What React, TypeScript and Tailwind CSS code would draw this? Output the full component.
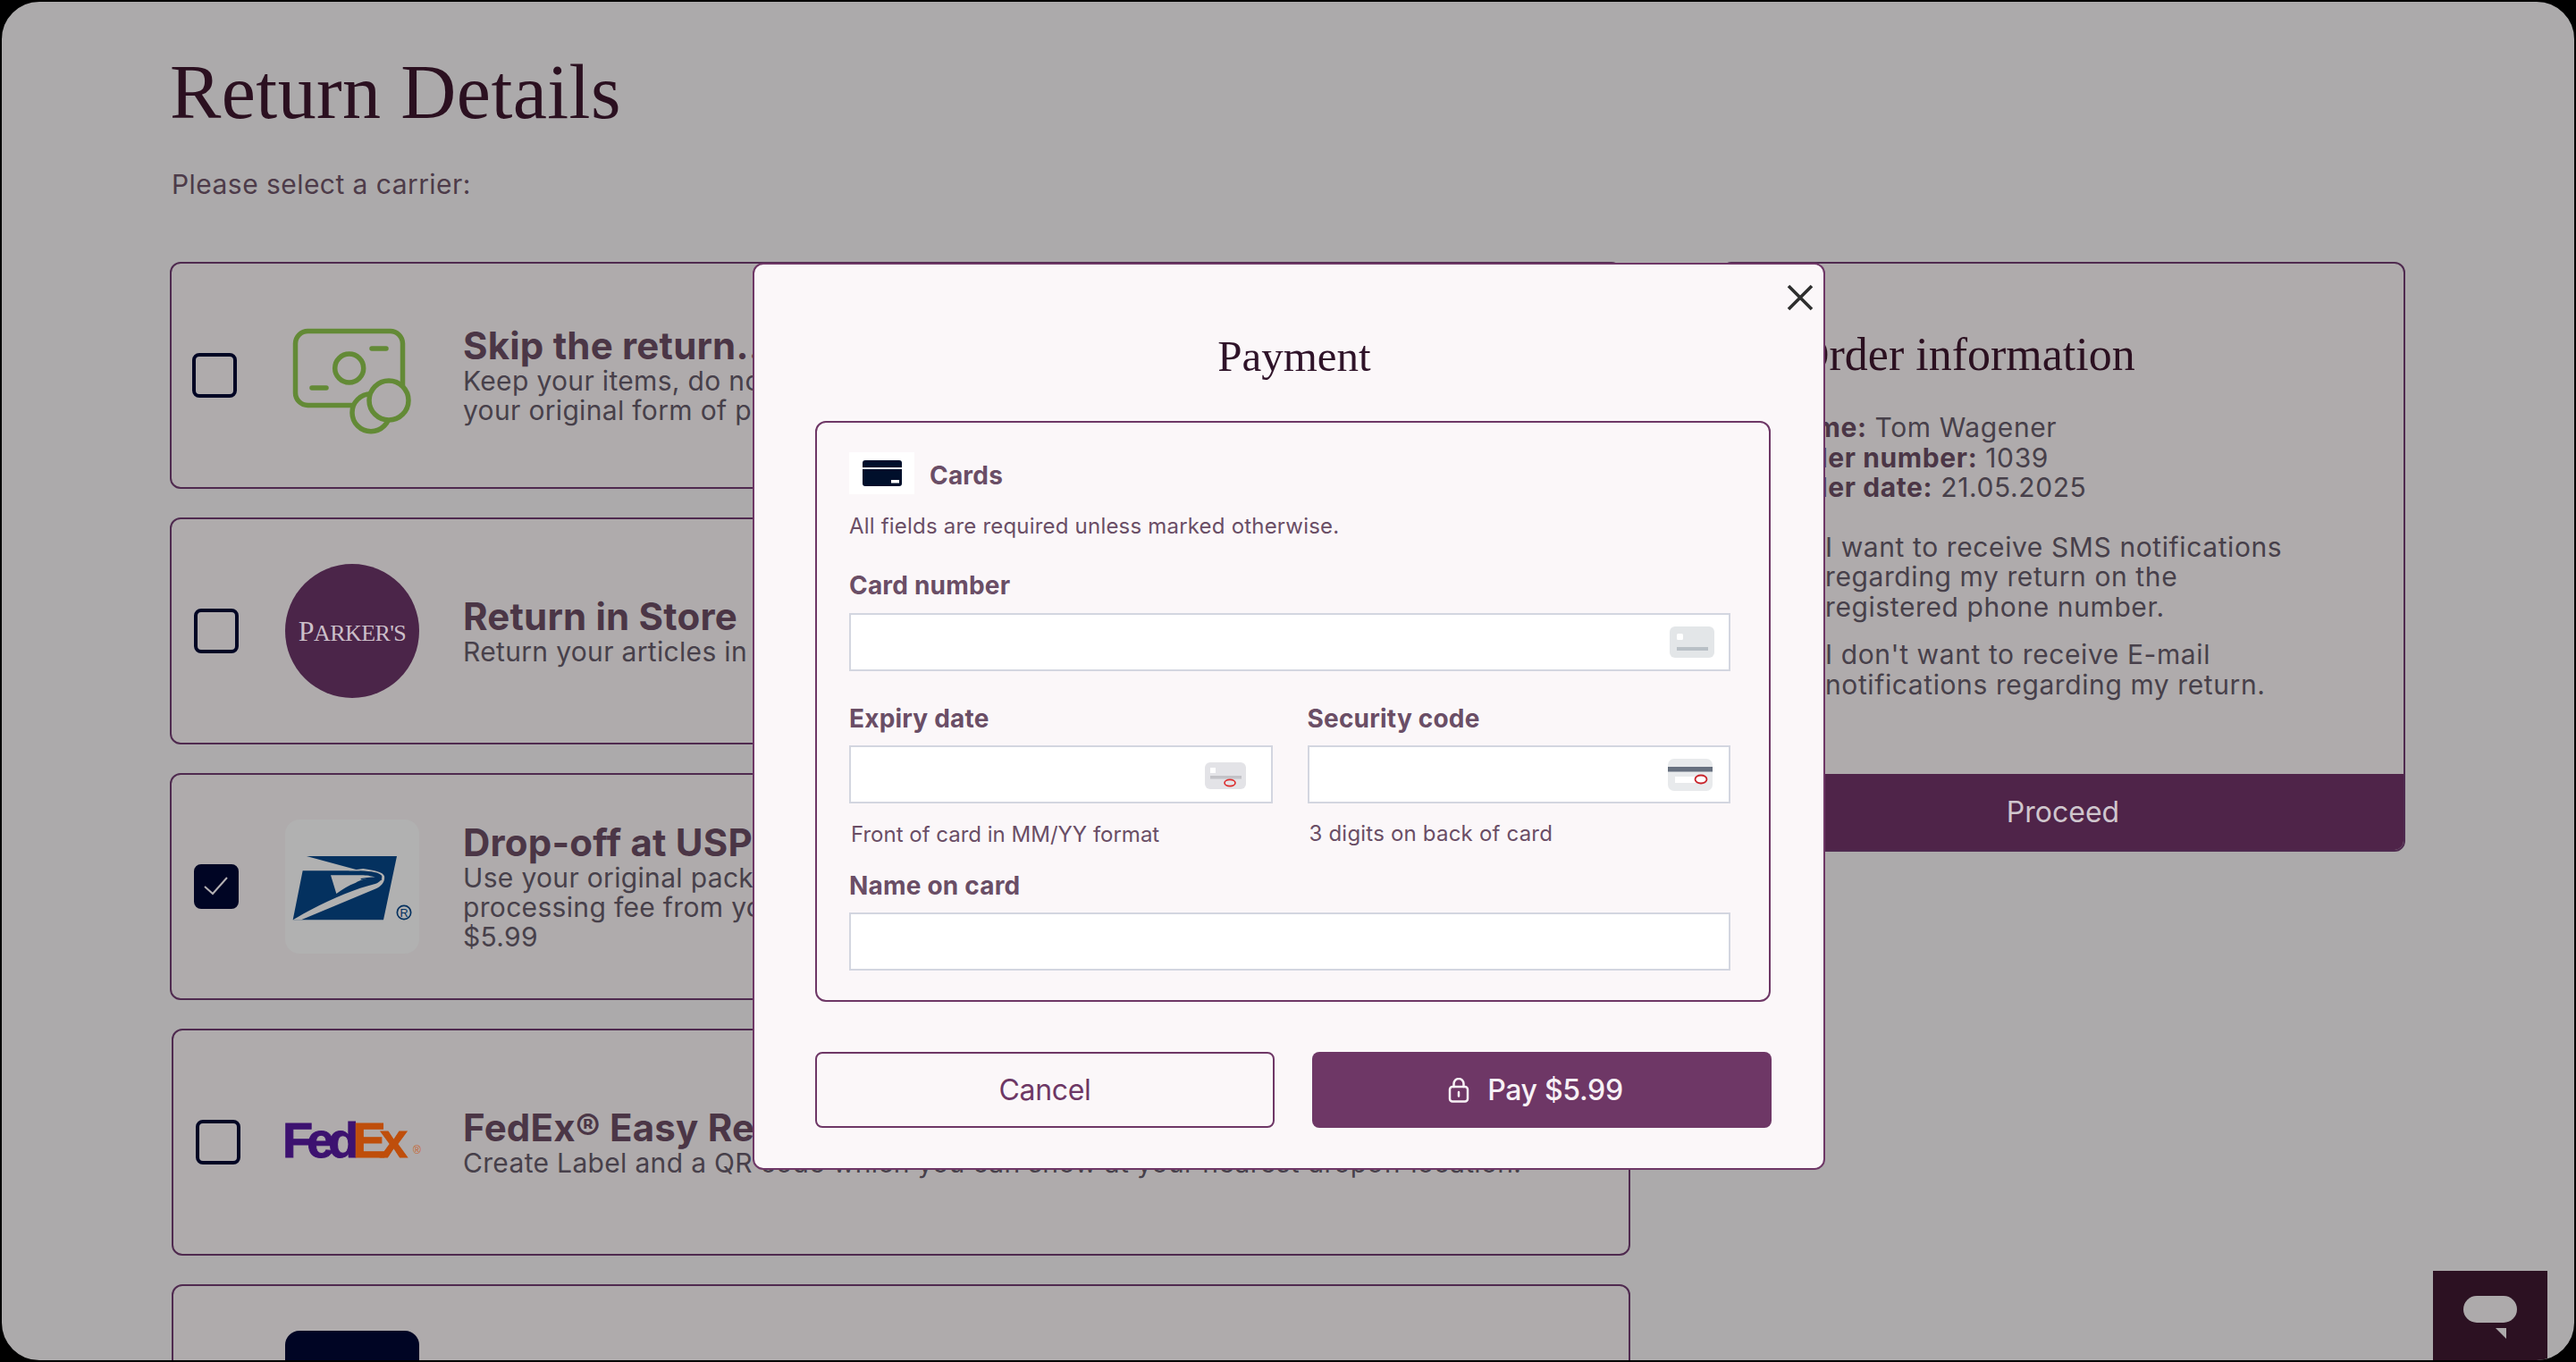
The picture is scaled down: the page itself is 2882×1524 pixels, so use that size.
const sans = "font-['Inter',sans-serif]";

function MoneyIcon() {
  return (
    <svg viewBox="0 0 150 150" className="h-[150px] w-[150px]" fill="none" stroke="#638a36" strokeWidth="5.5" strokeLinecap="round">
      <rect x="11.5" y="25.5" width="120" height="83" rx="14" />
      <circle cx="71.7" cy="67" r="16" />
      <path d="M97 45h16M30 89h16" />
      <circle cx="96" cy="116.7" r="21" fill="#afabac" />
      <circle cx="116" cy="103" r="22" fill="#afabac" />
    </svg>
  );
}

function ParkersLogo() {
  return (
    <div className="flex h-[150px] w-[150px] items-center justify-center rounded-full bg-[#4b2549]">
      <span className="font-['Liberation_Serif',serif] text-[32px] leading-none tracking-[-0.6px] text-[#cbbfc9]">
        P<span className="text-[26px]">ARKER'S</span>
      </span>
    </div>
  );
}

function UspsLogo() {
  return (
    <div className="h-[150px] w-[150px] rounded-2xl bg-[#b1b1b1]">
      <svg viewBox="388 50 450 450" className="h-full w-full">
        <path fill="#04315f" d="M460 173H763L718 387H414L447 222H640Z" />
        <path
          fill="#b1b1b1"
          d="M414 387H442L690 283C712 274 724 258 721 240C716 226 690 221 650 215L600 222H640C680 224 703 228 712 238C716 250 705 262 690 266C610 285 500 335 414 387Z"
        />
        <path fill="#b1b1b1" d="M541 237H650C670 238 680 241 690 244C665 246 640 252 625 262C600 270 580 285 560 299Z" />
        <path fill="none" stroke="#04315f" strokeWidth="4" d="M642 250C670 244 698 244 712 252" />
        <circle cx="787" cy="362" r="23" fill="none" stroke="#04315f" strokeWidth="5" />
        <text x="787" y="376" textAnchor="middle" fontSize="38" fill="#04315f" fontFamily="Liberation Sans, sans-serif">R</text>
      </svg>
    </div>
  );
}

function FedexLogo() {
  return (
    <div className="flex h-[150px] w-[150px] items-center">
      <span className="-ml-[3px] -translate-y-[2px] font-['Liberation_Sans',sans-serif] text-[56px] font-bold leading-none tracking-[-7px] [-webkit-text-stroke:1px_currentColor]">
        <span className="text-[#3d1270]">Fed</span>
        <span className="text-[#bf4e0b]">Ex</span>
      </span>
      <span className="ml-[13px] mt-[18px] font-['Liberation_Sans',sans-serif] text-[12px] leading-none text-[#c9622b]">®</span>
    </div>
  );
}

const carriers = [
  {
    pad: "pl-[23px]",
    gap: "gap-[54px]",
    width: "w-[1625px]",
    logo: <MoneyIcon />,
    title: "Skip the return...",
    lines: ["Keep your items, do not send anything back. We refund you to", "your original form of payment."],
  },
  {
    pad: "pl-[25px]",
    gap: "gap-[52px]",
    width: "w-[1625px]",
    logo: <ParkersLogo />,
    title: "Return in Store",
    lines: ["Return your articles in any of our stores free of charge."],
  },
  {
    pad: "pl-[25px]",
    gap: "gap-[52px]",
    width: "w-[1625px]",
    checked: true,
    logo: <UspsLogo />,
    title: "Drop-off at USPS",
    lines: ["Use your original packaging and drop it off. We deduct the", "processing fee from your refund.", "$5.99"],
  },
  {
    pad: "pl-[25px]",
    gap: "gap-[50px]",
    width: "w-[1632px] ml-[2px]",
    logo: <FedexLogo />,
    title: "FedEx® Easy Returns",
    lines: ["Create Label and a QR code which you can show at your nearest dropoff location."],
  },
];

function Checkbox({ checked }: { checked?: boolean }) {
  return (
    <div className={`flex h-[50px] w-[50px] shrink-0 items-center justify-center rounded-lg border-4 border-[#000524] ${checked ? "bg-[#000524]" : ""}`}>
      {checked && (
        <svg width="28" height="24" viewBox="0 0 28 24" fill="none" stroke="#b4b2b4" strokeWidth="2">
          <path d="M1 12l9 8L26 2" />
        </svg>
      )}
    </div>
  );
}

function CardIcon({ kind }: { kind: "number" | "expiry" | "cvc" }) {
  if (kind === "number") {
    return (
      <svg width="50" height="35" viewBox="0 0 50 35">
        <rect width="50" height="35" rx="6" fill="#e3e6e8" />
        <rect x="8" y="8" width="7" height="7" rx="1.5" fill="#fff" />
        <rect x="8" y="23" width="35" height="4" fill="#b9c0c6" />
      </svg>
    );
  }
  if (kind === "expiry") {
    return (
      <svg width="46" height="30" viewBox="0 0 46 30" className="mt-[3px]">
        <rect width="46" height="30" rx="6" fill="#e3e3e7" />
        <rect x="6" y="6" width="6" height="6" fill="#fff" />
        <rect x="6" y="15" width="35" height="3.5" fill="#c2c2c7" />
        <ellipse cx="28" cy="23" rx="6" ry="3.6" fill="none" stroke="#dd2a2a" strokeWidth="1.6" />
      </svg>
    );
  }
  return (
    <svg width="50" height="36" viewBox="0 0 50 36">
      <rect width="50" height="36" rx="7" fill="#e8eaec" />
      <rect y="9" width="50" height="5.5" fill="#67707f" />
      <rect x="8" y="20" width="34" height="7" fill="#fff" />
      <ellipse cx="37" cy="23" rx="6.5" ry="4.5" fill="#fff" stroke="#c8242b" strokeWidth="1.8" />
    </svg>
  );
}

function Field({ icon, pad }: { icon?: "number" | "expiry" | "cvc"; pad?: string }) {
  return (
    <div className={`flex h-[65px] items-center justify-end border-2 border-[#d3d6e0] bg-white ${pad ?? ""}`}>
      {icon && <CardIcon kind={icon} />}
    </div>
  );
}

const labelCls = "block text-[28px] font-bold leading-[36px] tracking-[0.2px]";
const hintCls = "text-[24px] leading-[36px]";

function PaymentModal() {
  return (
    <div className={`absolute left-[840px] top-[292px] h-[1015px] w-[1200px] rounded-xl border-2 border-[#6e3766] bg-[#fbf7f9] ${sans}`}>
      <svg width="30" height="30" viewBox="0 0 30 30" className="absolute right-[11px] top-[22px]" stroke="#2e2e2e" strokeWidth="3.6">
        <path d="M2 2l26 26M28 2L2 28" />
      </svg>
      <h2 className="mt-[73px] translate-x-[6px] text-center font-['Liberation_Serif',serif] text-[49px] leading-[60px] text-[#2f1329]">Payment</h2>
      <div className="ml-[68px] mt-[42px] h-[650px] w-[1069px] rounded-xl border-2 border-[#6e3766] pl-[36px] pr-[43px] pt-[33px] text-[#6a4e66]">
        <div className="flex items-center gap-[17px]">
          <div className="flex h-[47px] w-[73px] items-center justify-center bg-white">
            <svg width="44" height="29" viewBox="0 0 44 29">
              <rect width="44" height="29" rx="3" fill="#000f2b" />
              <rect y="8" width="44" height="2" fill="#f3f3f5" />
              <rect x="32" y="22" width="9" height="3.5" fill="#fff" />
            </svg>
          </div>
          <span className={`mt-[5px] ${labelCls}`}>Cards</span>
        </div>
        <p className={`mt-[18px] tracking-[0.2px] ${hintCls}`}>All fields are required unless marked otherwise.</p>
        <label className={`mt-[30px] ${labelCls}`}>Card number</label>
        <div className="mt-[13px]"><Field icon="number" pad="pr-[16px]" /></div>
        <div className="mt-[35px] grid grid-cols-2 gap-x-[39px]">
          <div>
            <label className={labelCls}>Expiry date</label>
            <div className="mt-[12px]"><Field icon="expiry" pad="pr-[28px]" /></div>
            <p className={`ml-[2px] mt-[17px] ${hintCls}`}>Front of card in MM/YY format</p>
          </div>
          <div>
            <label className={labelCls}>Security code</label>
            <div className="mt-[12px]"><Field icon="cvc" pad="pr-[18px]" /></div>
            <p className={`ml-[2px] mt-[16px] tracking-[0.2px] ${hintCls}`}>3 digits on back of card</p>
          </div>
        </div>
        <label className={`mt-[21px] ${labelCls}`}>Name on card</label>
        <div className="mt-[12px]"><Field /></div>
      </div>
      <div className="ml-[68px] mt-[56px] flex w-[1070px] gap-[42px]">
        <button className="h-[85px] w-[514px] rounded-lg border-2 border-[#6e3766] text-[32px] tracking-[-0.3px] text-[#6d3765]">Cancel</button>
        <button className="flex h-[85px] w-[514px] items-center justify-center gap-[20px] rounded-lg bg-[#6e3766] pr-[14px] text-[32px] font-medium tracking-[-0.3px] text-[#f7f1f5]">
          <svg width="24" height="28" viewBox="0 0 24 28" fill="none" stroke="#f7f1f5" strokeWidth="2.5" strokeLinecap="round">
            <rect x="2" y="10" width="20" height="16.5" rx="3" />
            <path d="M6.5 10V6.5a5.5 5.5 0 0 1 11 0V10M12 16v4.5" />
          </svg>
          Pay $5.99
        </button>
      </div>
    </div>
  );
}

export default function App() {
  return (
    <div className="h-[1524px] w-[2882px] overflow-hidden bg-black">
      <div className={`relative h-full w-full overflow-hidden rounded-[44px] border-2 border-black bg-[#acaaab] pl-[188px] ${sans}`}>
        <h1 className="mt-[58px] font-['Liberation_Serif',serif] text-[86px] leading-[86px] tracking-[0.4px] text-[#2b1020]">Return Details</h1>
        <p className="ml-[2px] mt-[40px] text-[30px] leading-[40px] tracking-[0.45px] text-[#4d3b49]">Please select a carrier:</p>

        <div className="mt-[67px] flex items-start gap-[101px]">
          <div className="flex flex-col gap-[32px]">
            {carriers.map((c) => (
              <div key={c.title} className={`flex h-[254px] items-center rounded-xl border-2 border-[#4f2a4f] bg-[#afabac] ${c.pad} ${c.gap} ${c.width}`}>
                <Checkbox checked={c.checked} />
                <div className="flex items-center gap-[49px]">
                  {c.logo}
                  <div className="text-[#47404a]">
                    <div className="text-[42px] font-bold leading-[46px] tracking-[0.2px] text-[#4b3646]">{c.title}</div>
                    {c.lines.map((l) => (
                      <div key={l} className="text-[30px] leading-[33px] tracking-[0.33px]">{l}</div>
                    ))}
                  </div>
                </div>
              </div>
            ))}
            <div className="ml-[2px] h-[254px] w-[1632px] rounded-xl border-2 border-[#4f2a4f] bg-[#afabac] pl-[123px] pt-[50px]">
              <div className="ml-[2px] h-[150px] w-[150px] rounded-2xl bg-[#000524]" />
            </div>
          </div>

          <div className="flex h-[660px] w-[766px] flex-col rounded-xl border-2 border-[#4f2a4f] bg-[#afabac] text-[30px] leading-[33.5px] tracking-[0.6px] text-[#47404a]">
            <h2 className="ml-[82px] mt-[72px] font-['Liberation_Serif',serif] text-[52px] leading-[60px] tracking-normal text-[#2b1020]">Order information</h2>
            <div className="ml-[63px] mt-[35px]">
              <div><b className="text-[#4b3646]">Name:</b> Tom Wagener</div>
              <div><b className="text-[#4b3646]">Order number:</b> 1039</div>
              <div><b className="text-[#4b3646]">Order date:</b> 21.05.2025</div>
            </div>
            <div className="ml-[115px] mt-[33px]">
              <div>I want to receive SMS notifications</div>
              <div>regarding my return on the</div>
              <div>registered phone number.</div>
            </div>
            <div className="ml-[115px] mt-[20px]">
              <div>I don't want to receive E-mail</div>
              <div>notifications regarding my return.</div>
            </div>
            <div className="mt-auto flex h-[85px] items-center justify-center rounded-b-[10px] bg-[#4f2449] text-[32px] tracking-normal text-[#cfc6cd]">Proceed</div>
          </div>
        </div>

        <PaymentModal />

        <div className="absolute bottom-0 left-[2720px] flex h-[100px] w-[128px] justify-center bg-[#2c1122] pt-[28px]">
          <svg width="60" height="48" viewBox="0 0 60 48">
            <rect width="60" height="30" rx="15" fill="#adaaab" />
            <path d="M36 36H48V48Z" fill="#adaaab" />
          </svg>
        </div>
      </div>
    </div>
  );
}
